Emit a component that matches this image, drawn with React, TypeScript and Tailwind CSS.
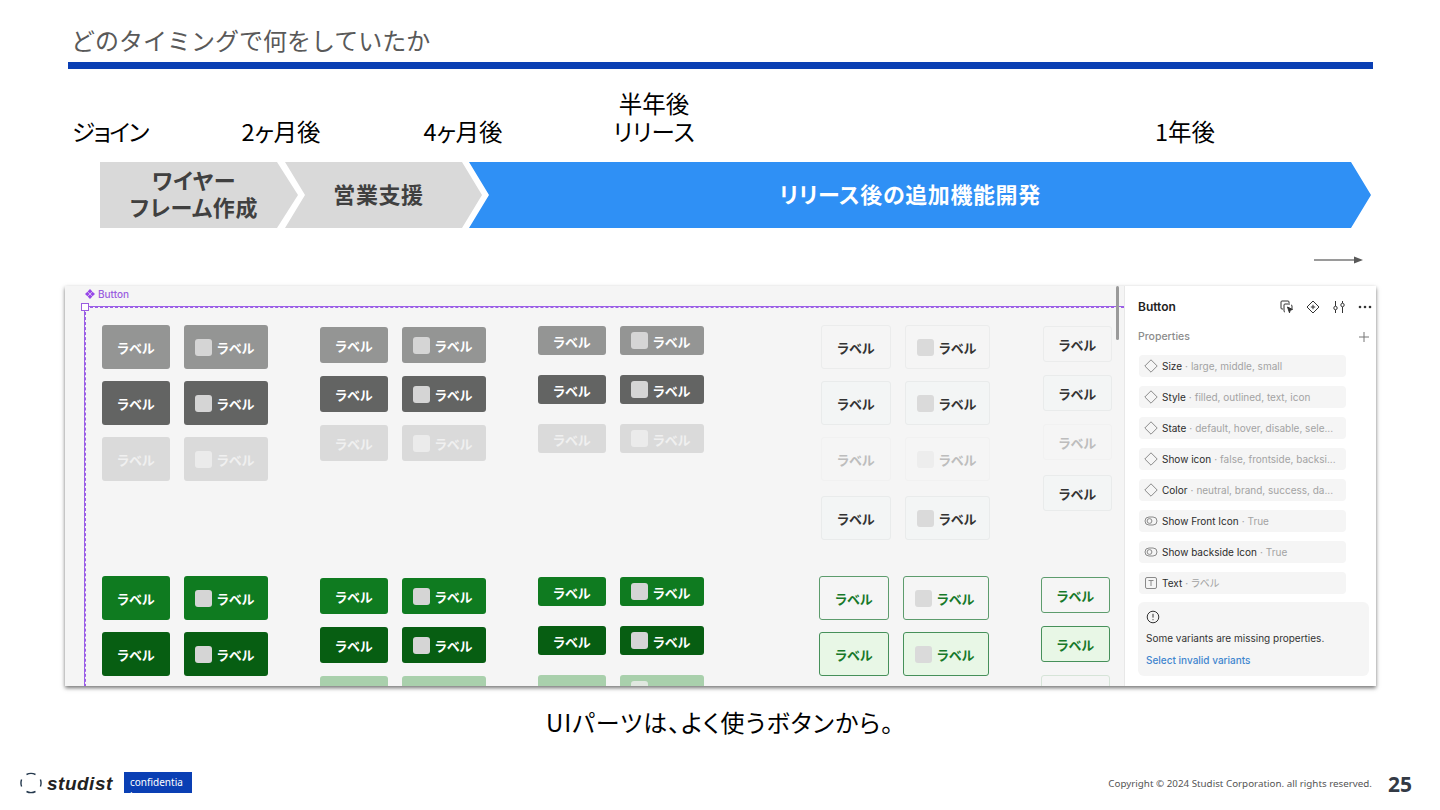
import React from "react";

type Tone =
  | "gray"
  | "dark"
  | "faint"
  | "green"
  | "deep"
  | "pale"
  | "line"
  | "lineHover"
  | "lineOff"
  | "greenLine"
  | "greenHover"
  | "greenOff";

const toneClass: Record<Tone, string> = {
  gray: "bg-[#949594] text-white",
  dark: "bg-[#636463] text-white",
  faint: "bg-[#dadada] text-[#f0f0f0]",
  green: "bg-[#0f7b20] text-white",
  deep: "bg-[#075e12] text-white",
  pale: "bg-[#a9d0ac] text-[#e8f3e8]",
  line: "bg-[#f5f5f5] border border-[#ebecec] text-[#333333]",
  lineHover: "bg-[#f3f5f5] border border-[#e9ebeb] text-[#333333]",
  lineOff: "bg-[#f5f5f5] border border-[#f1f1f1] text-[#bdbdbd]",
  greenLine: "bg-[#f5f5f5] border border-[#5d9c6d] text-[#17792a]",
  greenHover: "bg-[#e8f7e6] border border-[#46905a] text-[#17792a]",
  greenOff: "bg-[#f5f5f5] border border-[#d6e4d8] text-[#9cc4a3]",
};

const chipClass: Partial<Record<Tone, string>> = {
  gray: "bg-[#d5d5d5]",
  dark: "bg-[#d5d5d5]",
  faint: "bg-[#ebebeb]",
  green: "bg-[#d5d5d5]",
  deep: "bg-[#d5d5d5]",
  pale: "bg-[#e0e8e0]",
  lineOff: "bg-[#ededed]",
};

type BtnProps = {
  tone: Tone;
  size: string;
  icon?: boolean;
};

const LabelButton = ({ tone, size, icon }: BtnProps) => (
  <div
    className={`${size} ${toneClass[tone]} shrink-0 rounded-[3px] flex items-center text-[13px] font-semibold leading-none ${
      icon ? "pl-[11px] gap-[5px]" : "justify-center"
    }`}
  >
    {icon && (
      <span className={`w-[17px] h-[17px] rounded-[3px] ${chipClass[tone] ?? "bg-[#dadada]"}`} />
    )}
    {/* these rows are cut by the bottom edge before their label starts */}
    {tone !== "pale" && tone !== "greenOff" && <span className="pt-[3px]">ラベル</span>}
  </div>
);

type RowSpec = { tone: Tone; mt: string };

const ButtonColumn = ({
  rows,
  height,
  widths,
  gap,
  className,
}: {
  rows: RowSpec[];
  height: string;
  widths: string[];
  gap: string;
  className: string;
}) => (
  <div className={`flex flex-col shrink-0 ${className}`}>
    {rows.map((row, i) => (
      <div key={i} className={`flex ${gap} ${row.mt}`}>
        {widths.map((w, j) => (
          <LabelButton key={j} tone={row.tone} size={`${w} ${height}`} icon={j === 1} />
        ))}
      </div>
    ))}
  </div>
);

const DiamondIcon = () => (
  <svg width="14" height="14" viewBox="0 0 14 14" fill="none" stroke="#8a8a8a" strokeWidth="1" className="shrink-0">
    <path d="M7 0.8 L13.2 7 L7 13.2 L0.8 7 Z" strokeLinejoin="round" />
  </svg>
);

const ToggleIcon = () => (
  <svg width="14" height="14" viewBox="0 0 14 14" fill="none" stroke="#8a8a8a" strokeWidth="1" className="shrink-0">
    <rect x="1" y="3" width="12" height="8" rx="4" />
    <circle cx="5.5" cy="7" r="2.4" />
  </svg>
);

const TextIcon = () => (
  <svg width="14" height="14" viewBox="0 0 14 14" fill="none" stroke="#8a8a8a" strokeWidth="1" className="shrink-0">
    <rect x="1.5" y="1.5" width="11" height="11" rx="1.5" />
    <path d="M4.5 4.5 H9.5 M7 4.5 V10" />
  </svg>
);

const props: { name: string; value: string; icon: React.ReactNode }[] = [
  { name: "Size", value: "large, middle, small", icon: <DiamondIcon /> },
  { name: "Style", value: "filled, outlined, text, icon", icon: <DiamondIcon /> },
  { name: "State", value: "default, hover, disable, sele...", icon: <DiamondIcon /> },
  { name: "Show icon", value: "false, frontside, backsi...", icon: <DiamondIcon /> },
  { name: "Color", value: "neutral, brand, success, da...", icon: <DiamondIcon /> },
  { name: "Show Front Icon", value: "True", icon: <ToggleIcon /> },
  { name: "Show backside Icon", value: "True", icon: <ToggleIcon /> },
  { name: "Text", value: "ラベル", icon: <TextIcon /> },
];

const PropertiesPanel = () => (
  <div className="w-[252px] shrink-0 bg-white border-l border-[#e8e8e8] flex flex-col font-['Inter','Noto_Sans_CJK_JP',sans-serif]">
    <div className="flex items-center h-[16px] mt-[13px] pl-[13px] pr-[4px]">
      <span className="text-[12px] font-semibold text-[#222222]">Button</span>
      <div className="ml-auto flex items-center gap-[12px] text-[#333333]">
        <svg width="14" height="14" viewBox="0 0 14 14" fill="none" stroke="#333333" strokeWidth="1">
          <path d="M9 3 V2 a1 1 0 0 0 -1 -1 H2 a1 1 0 0 0 -1 1 V8 a1 1 0 0 0 1 1 H3" />
          <path d="M11 5 a1 1 0 0 1 1 1 V9 M5 12 a1 1 0 0 1 -1 -1 V5 a1 1 0 0 1 1 -1 H10" />
          <path d="M7.5 7 L12.5 9.5 L10.2 10.2 L9.5 12.8 Z" fill="#333333" />
        </svg>
        <svg width="14" height="14" viewBox="0 0 14 14" fill="none" stroke="#333333" strokeWidth="1">
          <path d="M7 1 L13 7 L7 13 L1 7 Z" strokeLinejoin="round" />
          <path d="M7 4.8 V9.2 M4.8 7 H9.2" />
        </svg>
        <svg width="14" height="14" viewBox="0 0 14 14" fill="none" stroke="#333333" strokeWidth="1">
          <path d="M3.5 1 V6 M3.5 10 V13 M10.5 1 V3 M10.5 7 V13" />
          <circle cx="3.5" cy="8" r="1.7" />
          <circle cx="10.5" cy="5" r="1.7" />
        </svg>
        <svg width="14" height="14" viewBox="0 0 14 14" fill="#333333">
          <circle cx="2" cy="7" r="1.3" />
          <circle cx="7" cy="7" r="1.3" />
          <circle cx="12" cy="7" r="1.3" />
        </svg>
      </div>
    </div>
    <div className="flex items-center mt-[15px] h-[14px] pl-[13px] pr-[6px]">
      <span className="text-[10.5px] font-medium text-[#8c8c8c]">Properties</span>
      <svg className="ml-auto" width="12" height="12" viewBox="0 0 12 12" stroke="#777777" strokeWidth="1">
        <path d="M6 1 V11 M1 6 H11" />
      </svg>
    </div>
    <div className="flex flex-col gap-[9px] mt-[11px] ml-[14px] w-[207px]">
      {props.map((p) => (
        <div key={p.name} className="h-[22px] rounded-[4px] bg-[#f5f5f5] flex items-center gap-[4px] pl-[5px] text-[10px] whitespace-nowrap">
          {p.icon}
          <span className="flex items-center">
            <span className="text-[#2c2c2c]">{p.name}</span>
            <span className="text-[#a3a3a3] mx-[3px]">·</span>
            <span className="text-[#a3a3a3]">{p.value}</span>
          </span>
        </div>
      ))}
    </div>
    <div className="mt-[8px] ml-[13px] w-[231px] h-[74px] rounded-[6px] bg-[#f5f5f5] pl-[8px] pt-[8px] flex flex-col text-[10px]">
      <svg width="14" height="14" viewBox="0 0 14 14" fill="none" stroke="#333333" strokeWidth="1">
        <circle cx="7" cy="7" r="5.8" />
        <path d="M7 3.8 V7.6 M7 9.2 V10.2" />
      </svg>
      <span className="mt-[7px] h-[14px] leading-[14px] text-[#333333]">Some variants are missing properties.</span>
      <span className="mt-[8px] h-[14px] leading-[14px] font-medium text-[#3f86cf]">Select invalid variants</span>
    </div>
  </div>
);

const Canvas = () => (
  <div className="relative flex-1 min-w-0 bg-[#f5f5f5] flex flex-col overflow-hidden font-['Inter','Noto_Sans_CJK_JP',sans-serif]">
    <div className="h-[20px] pl-[20px] pb-[4px] flex items-center gap-[3px] shrink-0 text-[10px] font-medium text-[#9a5de0]">
      <svg width="10" height="10" viewBox="0 0 10 10" fill="#9747e8">
        <path d="M5 0 L7.4 2.4 L5 4.6 L2.6 2.4 Z M5 10 L7.4 7.6 L5 5.4 L2.6 7.6 Z M0 5 L2.4 2.8 L4.6 5 L2.4 7.2 Z M10 5 L7.6 2.8 L5.4 5 L7.6 7.2 Z" />
      </svg>
      <span>Button</span>
    </div>
    <div className="ml-[19px] flex-1 border-t border-l border-[#9b5fe6]">
      <div className="h-full border-t border-l border-dashed border-[#9b5fe6] flex pl-[16px]">
        <ButtonColumn
          className="mr-[52px]"
          widths={["w-[68px]", "w-[84px]"]}
          height="h-[44px]"
          gap="gap-[14px]"
          rows={[
            { tone: "gray", mt: "mt-[17px]" },
            { tone: "dark", mt: "mt-[12px]" },
            { tone: "faint", mt: "mt-[12px]" },
            { tone: "green", mt: "mt-[95px]" },
            { tone: "deep", mt: "mt-[12px]" },
          ]}
        />
        <ButtonColumn
          className="mr-[52px]"
          widths={["w-[68px]", "w-[84px]"]}
          height="h-[36px]"
          gap="gap-[14px]"
          rows={[
            { tone: "gray", mt: "mt-[19px]" },
            { tone: "dark", mt: "mt-[13px]" },
            { tone: "faint", mt: "mt-[13px]" },
            { tone: "green", mt: "mt-[117px]" },
            { tone: "deep", mt: "mt-[13px]" },
            { tone: "pale", mt: "mt-[13px]" },
          ]}
        />
        <ButtonColumn
          className="mr-[117px]"
          widths={["w-[68px]", "w-[84px]"]}
          height="h-[29px]"
          gap="gap-[14px]"
          rows={[
            { tone: "gray", mt: "mt-[18px]" },
            { tone: "dark", mt: "mt-[20px]" },
            { tone: "faint", mt: "mt-[20px]" },
            { tone: "green", mt: "mt-[124px]" },
            { tone: "deep", mt: "mt-[20px]" },
            { tone: "pale", mt: "mt-[20px]" },
          ]}
        />
        <div className="mr-[53px] shrink-0">
          <ButtonColumn
            className=""
            widths={["w-[70px]", "w-[85px]"]}
            height="h-[44px]"
            gap="gap-[14px]"
            rows={[
              { tone: "line", mt: "mt-[17px]" },
              { tone: "lineHover", mt: "mt-[12px]" },
              { tone: "lineOff", mt: "mt-[12px]" },
              { tone: "lineHover", mt: "mt-[15px]" },
            ]}
          />
          <ButtonColumn
            className="-ml-[2px]"
            widths={["w-[70px]", "w-[86px]"]}
            height="h-[44px]"
            gap="gap-[14px]"
            rows={[
              { tone: "greenLine", mt: "mt-[36px]" },
              { tone: "greenHover", mt: "mt-[12px]" },
            ]}
          />
        </div>
        <div className="shrink-0">
          <ButtonColumn
            className=""
            widths={["w-[69px]"]}
            height="h-[36px]"
            gap="gap-0"
            rows={[
              { tone: "line", mt: "mt-[18px]" },
              { tone: "lineHover", mt: "mt-[13px]" },
              { tone: "lineOff", mt: "mt-[13px]" },
              { tone: "lineHover", mt: "mt-[15px]" },
            ]}
          />
          <ButtonColumn
            className="-ml-[2px]"
            widths={["w-[69px]"]}
            height="h-[36px]"
            gap="gap-0"
            rows={[
              { tone: "greenLine", mt: "mt-[66px]" },
              { tone: "greenHover", mt: "mt-[13px]" },
              { tone: "greenOff", mt: "mt-[13px]" },
            ]}
          />
        </div>
      </div>
    </div>
    {/* frame handle and scrollbar sit on top of the canvas */}
    <span className="absolute left-[16px] top-[17px] w-[8px] h-[8px] bg-white border border-[#9a5de0]" />
    <span className="absolute left-[1051px] top-0 w-[3px] h-[54px] rounded-full bg-[#9a9a9a]" />
  </div>
);

const milestones = [
  { lines: ["ジョイン"], cls: "tracking-[-1.5px]" },
  { lines: ["2ヶ月後"], cls: "ml-[71px]" },
  { lines: ["4ヶ月後"], cls: "ml-[82px]" },
  { lines: ["半年後", "リリース"], cls: "ml-[91px]" },
  { lines: ["1年後"], cls: "ml-[431px]" },
];

export default function App() {
  return (
    <div className="w-[1440px] h-[810px] bg-white overflow-hidden flex flex-col font-['Noto_Sans_CJK_JP',sans-serif] [font-feature-settings:'palt']">
      <div className="h-[62px] pl-[71px] pt-[24px] text-[24px] leading-[32px] text-[#595959] shrink-0 [font-feature-settings:normal]">
        どのタイミングで何をしていたか
      </div>
      <div className="ml-[68px] w-[1305px] h-[7px] bg-[#0a3fb4] shrink-0" />

      <div className="mt-[20px] pl-[60px] flex items-end text-[23.5px] leading-[28px] text-black shrink-0">
        {milestones.map((m) => (
          <div key={m.lines[0]} className={`w-[100px] text-center whitespace-nowrap ${m.cls}`}>
            {m.lines.map((l) => (
              <div key={l}>{l}</div>
            ))}
          </div>
        ))}
      </div>

      <div className="mt-[17px] ml-[100px] h-[66px] flex font-bold text-[22px] leading-[28px] tracking-[0.6px] shrink-0">
        <div className="w-[198px] pr-[10px] pb-[5px] bg-[#d9d9d9] text-[#404040] flex items-center justify-center text-center [clip-path:polygon(0_0,177px_0,198px_50%,177px_100%,0_100%)]">
          <span className="leading-[27px]">
            ワイヤー
            <br />
            フレーム作成
          </span>
        </div>
        <div className="w-[197px] -ml-[13px] pr-[10px] pb-[5px] bg-[#d9d9d9] text-[#404040] flex items-center justify-center [clip-path:polygon(0_0,177px_0,197px_50%,177px_100%,0_100%,20px_50%)]">
          営業支援
        </div>
        <div className="w-[902px] -ml-[13px] pr-[20px] pb-[5px] bg-[#2f90f5] text-white flex items-center justify-center [clip-path:polygon(0_0,882px_0,902px_50%,882px_100%,0_100%,20px_50%)]">
          リリース後の追加機能開発
        </div>
      </div>

      <div className="h-[58px] pl-[1314px] pt-[6px] flex items-center shrink-0">
        <svg width="49" height="8" viewBox="0 0 49 8" fill="#595959">
          <rect x="0" y="3.4" width="42" height="1.2" />
          <path d="M40 0.5 L49 4 L40 7.5 Z" />
        </svg>
      </div>

      <div className="ml-[65px] w-[1311px] h-[400px] flex shrink-0 shadow-[0_2px_4px_rgba(0,0,0,0.55)]">
        <Canvas />
        <PropertiesPanel />
      </div>

      <div className="mt-[22px] h-[28px] pl-[546px] text-[24px] leading-[28px] tracking-[1px] text-black shrink-0">
        UIパーツは、よく使うボタンから。
      </div>

      <div className="mt-[36px] h-[21px] flex items-center shrink-0 pl-[20px] pr-[28px]">
        <svg width="22" height="22" viewBox="0 0 22 22" fill="none" stroke="#24384d" strokeWidth="1.4">
          <path d="M6.5 2.5 A10 10 0 0 1 15.5 2.5" />
          <path d="M20.4 7.5 A10 10 0 0 1 20.4 14.5" />
          <path d="M15.5 19.5 A10 10 0 0 1 6.5 19.5" />
          <path d="M1.6 14.5 A10 10 0 0 1 1.6 7.5" />
        </svg>
        <span className="ml-[5px] w-[77px] pt-[2px] font-['Liberation_Sans',sans-serif] italic font-bold text-[19px] leading-none tracking-[0.5px] text-[#222222]">
          studist
        </span>
        <div className="w-[68px] h-[21px] bg-[#0a3fb4] text-white text-[10px] leading-[14px] pl-[6px] pr-[9px] pt-[3px] overflow-hidden break-all font-['Noto_Sans',sans-serif]">
          confidential
        </div>
        <span className="ml-auto pt-[3px] font-['Noto_Sans',sans-serif] text-[9.8px] text-[#555555] whitespace-nowrap">
          Copyright © 2024 Studist Corporation. all rights reserved.
        </span>
        <span className="ml-[16px] pt-[3px] font-['Noto_Sans',sans-serif] font-bold text-[21px] leading-none text-[#333a45]">
          25
        </span>
      </div>
    </div>
  );
}
